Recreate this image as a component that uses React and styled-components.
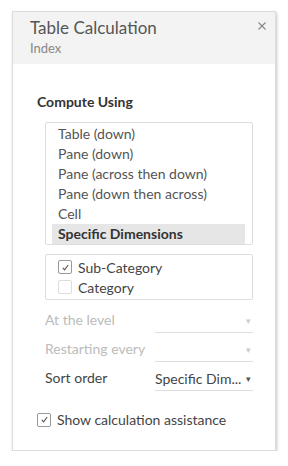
import React from "react";
import styled, { createGlobalStyle } from "styled-components";

const GlobalStyle = createGlobalStyle`
  body {
    margin: 0;
    background: #ffffff;
    font-family: Lato, "Open Sans", "Liberation Sans", sans-serif;
  }
`;

const computeOptions = [
  "Table (down)",
  "Pane (down)",
  "Pane (across then down)",
  "Pane (down then across)",
  "Cell",
  "Specific Dimensions",
];

function CheckMark() {
  return (
    <svg width="9" height="9" viewBox="0 0 9 9">
      <path d="M1.8 4.8 L3.6 6.8 L7.2 2" fill="none" stroke="#555" strokeWidth="1.1" />
    </svg>
  );
}

function CloseIcon() {
  return (
    <svg width="8" height="8" viewBox="0 0 8 8">
      <path d="M0.5 0.5 L7.5 7.5 M7.5 0.5 L0.5 7.5" stroke="#888" strokeWidth="1.1" />
    </svg>
  );
}

function App() {
  return (
    <>
      <GlobalStyle />
      <Panel>
        <Header>
          <TitleBlock>
            <Title>Table Calculation</Title>
            <Subtitle>Index</Subtitle>
          </TitleBlock>
          <Close>
            <CloseIcon />
          </Close>
        </Header>
        <Body>
          <SectionTitle>Compute Using</SectionTitle>
          <ListBox>
            {computeOptions.map((opt) => (
              <ListItem key={opt} selected={opt === "Specific Dimensions"}>
                {opt}
              </ListItem>
            ))}
          </ListBox>
          <DimBox>
            <CheckRow>
              <Box>
                <CheckMark />
              </Box>
              Sub-Category
            </CheckRow>
            <CheckRow>
              <Box faint />
              Category
            </CheckRow>
          </DimBox>
          <Fields>
            <Field disabled>
              <FieldLabel>At the level</FieldLabel>
              <Select>
                <span></span>
                <Arrow>▾</Arrow>
              </Select>
            </Field>
            <Field disabled>
              <FieldLabel>Restarting every</FieldLabel>
              <Select>
                <span></span>
                <Arrow>▾</Arrow>
              </Select>
            </Field>
            <Field>
              <FieldLabel>Sort order</FieldLabel>
              <Select>
                <span>Specific Dim...</span>
                <Arrow dark>▾</Arrow>
              </Select>
            </Field>
          </Fields>
          <AssistRow>
            <Box>
              <CheckMark />
            </Box>
            Show calculation assistance
          </AssistRow>
        </Body>
      </Panel>
    </>
  );
}

export default App;

const Panel = styled.div`
  margin: 11px 0 0 12px;
  width: 264px;
  height: 440px;
  border: 1px solid #dcdcdc;
  box-shadow: 1px 2px 3px rgba(0, 0, 0, 0.22);
  background: #fff;
  box-sizing: border-box;
`;

const Header = styled.div`
  display: flex;
  justify-content: space-between;
  align-items: flex-start;
  background: #f3f3f3;
  height: 52px;
  padding: 6px 9px 0 17px;
  box-sizing: border-box;
`;

const TitleBlock = styled.div`
  display: flex;
  flex-direction: column;
`;

const Title = styled.div`
  font-size: 17px;
  color: #555;
  line-height: 20px;
`;

const Subtitle = styled.div`
  font-size: 13px;
  color: #888;
  line-height: 16px;
  margin-top: 2px;
`;

const Close = styled.div`
  display: flex;
  margin-top: 4px;
`;

const Body = styled.div`
  padding: 30px 24px 0 24px;
`;

const SectionTitle = styled.div`
  font-size: 14px;
  font-weight: bold;
  color: #333;
  line-height: 16px;
  margin-bottom: 12px;
`;

const ListBox = styled.div`
  margin-left: 8px;
  width: 208px;
  border: 1px solid #ddd;
  border-radius: 2px;
  box-sizing: border-box;
  padding: 1px 7px 0 6px;
`;

const ListItem = styled.div`
  font-size: 14px;
  line-height: 20px;
  height: 20px;
  padding-left: 6px;
  white-space: nowrap;
  color: ${(p) => (p.selected ? "#333" : "#555")};
  font-weight: ${(p) => (p.selected ? "bold" : "normal")};
  background: ${(p) => (p.selected ? "#e6e6e6" : "transparent")};
`;

const DimBox = styled.div`
  margin: 9px 0 0 8px;
  width: 208px;
  border: 1px solid #ddd;
  border-radius: 2px;
  box-sizing: border-box;
  padding: 2px 0 2px 12px;
`;

const CheckRow = styled.div`
  display: flex;
  align-items: center;
  gap: 6px;
  font-size: 14px;
  color: #444;
  height: 20px;
`;

const Box = styled.div`
  width: 12px;
  height: 12px;
  border: 1px solid ${(p) => (p.faint ? "#ddd" : "#999")};
  border-radius: 2px;
  display: flex;
  align-items: center;
  justify-content: center;
  box-sizing: content-box;
  background: #fff;
  flex-shrink: 0;
`;

const Fields = styled.div`
  margin-top: 4px;
`;

const Field = styled.div`
  display: flex;
  align-items: flex-end;
  margin-left: 8px;
  width: 208px;
  height: 29px;
  color: ${(p) => (p.disabled ? "#bbb" : "#444")};
  font-size: 14px;
`;

const FieldLabel = styled.div`
  width: 110px;
  line-height: 20px;
  padding-bottom: 3px;
`;

const Select = styled.div`
  flex: 1;
  display: flex;
  justify-content: space-between;
  align-items: center;
  border-bottom: 1px solid #ddd;
  height: 24px;
  padding-right: 2px;
  white-space: nowrap;
`;

const Arrow = styled.span`
  font-size: 9px;
  color: ${(p) => (p.dark ? "#555" : "#ccc")};
`;

const AssistRow = styled.div`
  display: flex;
  align-items: center;
  gap: 6px;
  font-size: 14px;
  color: #444;
  margin-top: 20px;
`;
